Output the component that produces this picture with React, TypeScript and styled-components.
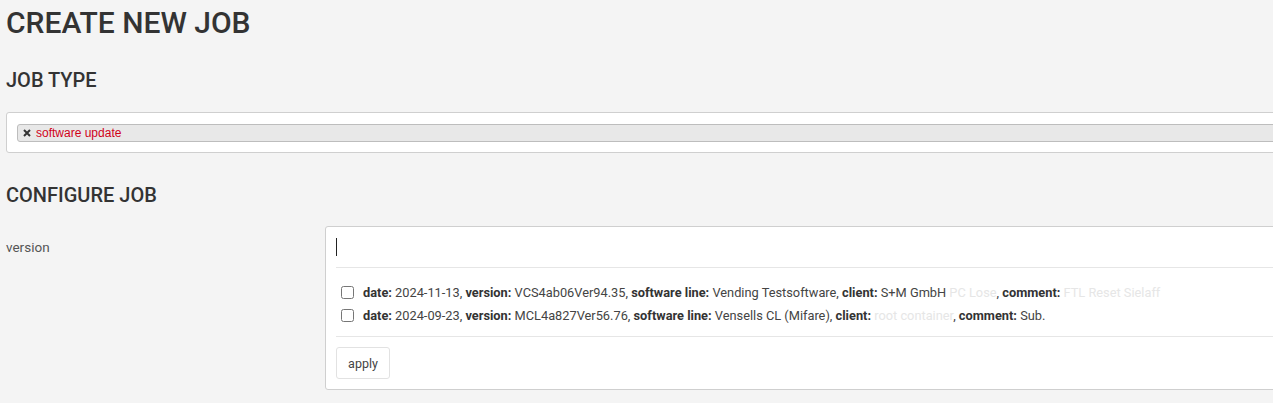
import React from "react";
import styled, { createGlobalStyle } from "styled-components";

const GlobalStyle = createGlobalStyle`
  html, body {
    margin: 0;
    padding: 0;
    background: #f4f4f4;
    overflow: hidden;
  }
  body {
    font-family: Roboto, "Liberation Sans", Arial, sans-serif;
    color: #333;
  }
`;

interface IVersionItem {
  id: number;
  date: string;
  version: string;
  softwareLine: string;
  client: string;
  clientHidden?: string;
  comment: string;
  commentHidden?: boolean;
}

const versions: IVersionItem[] = [
  {
    id: 1,
    date: "2024-11-13",
    version: "VCS4ab06Ver94.35",
    softwareLine: "Vending Testsoftware",
    client: "S+M GmbH ",
    clientHidden: "PC Lose",
    comment: "FTL Reset Sielaff",
    commentHidden: true,
  },
  {
    id: 2,
    date: "2024-09-23",
    version: "MCL4a827Ver56.76",
    softwareLine: "Vensells CL (Mifare)",
    client: "",
    clientHidden: "root container",
    comment: "Sub.",
  },
];

const App = () => {
  return (
    <>
      <GlobalStyle />
      <PageWrapper>
        <Title>CREATE NEW JOB</Title>
        <SectionTitle>JOB TYPE</SectionTitle>
        <TypeBox>
          <Chip>
            <ChipRemove viewBox="0 0 8 8">
              <path d="M1 1 L7 7 M7 1 L1 7" />
            </ChipRemove>
            <ChipLabel>software update</ChipLabel>
          </Chip>
        </TypeBox>
        <SectionTitle className="configure">CONFIGURE JOB</SectionTitle>
        <FieldRow>
          <FieldLabel>version</FieldLabel>
          <Panel>
            <SearchArea>
              <Caret />
            </SearchArea>
            <OptionList>
              {versions.map((v) => (
                <OptionRow key={v.id}>
                  <CheckBox type="checkbox" />
                  <span>
                    <b>date:</b> {v.date}, <b>version:</b> {v.version},{" "}
                    <b>software line:</b> {v.softwareLine}, <b>client:</b>{" "}
                    {v.client}
                    {v.clientHidden && <Faded>{v.clientHidden}</Faded>},{" "}
                    <b>comment:</b>{" "}
                    {v.commentHidden ? <Faded>{v.comment}</Faded> : v.comment}
                  </span>
                </OptionRow>
              ))}
            </OptionList>
            <Footer>
              <ApplyButton>apply</ApplyButton>
            </Footer>
          </Panel>
        </FieldRow>
      </PageWrapper>
    </>
  );
};
export default App;

const PageWrapper = styled.div`
  width: 1300px;
  padding: 0 0 0 6px;
  box-sizing: border-box;
`;
const Title = styled.h1`
  margin: 0;
  padding-top: 4px;
  font-size: 30px;
  line-height: 38px;
  font-weight: 500;
  color: #333;
`;
const SectionTitle = styled.h2`
  margin: 26px 0 0;
  font-size: 20px;
  line-height: 24px;
  font-weight: 500;
  color: #333;
  &.configure {
    margin-top: 30px;
  }
`;
const TypeBox = styled.div`
  margin-top: 20px;
  height: 41px;
  box-sizing: border-box;
  border: 1px solid #cfcfcf;
  border-radius: 3px;
  background: #fff;
  padding: 11px 10px 0 10px;
`;
const Chip = styled.div`
  display: flex;
  align-items: center;
  height: 18px;
  box-sizing: border-box;
  border: 1px solid #bdbdbd;
  border-radius: 3px;
  background: #e8e8e8;
  padding: 0 5px;
  gap: 5px;
  font-size: 12px;
`;
const ChipRemove = styled.svg`
  width: 8px;
  height: 8px;
  flex-shrink: 0;
  stroke: #333;
  stroke-width: 2;
  fill: none;
`;
const ChipLabel = styled.span`
  color: #d0021b;
  font-family: "Liberation Sans", Arial, sans-serif;
`;
const FieldRow = styled.div`
  display: flex;
  margin-top: 19px;
`;
const FieldLabel = styled.div`
  width: 319px;
  flex-shrink: 0;
  padding-top: 13px;
  font-size: 13.5px;
  color: #555;
`;
const Panel = styled.div`
  flex: 1;
  height: 164px;
  box-sizing: border-box;
  border: 1px solid #cfcfcf;
  border-radius: 3px;
  background: #fff;
  padding: 0 0 0 10px;
  display: flex;
  flex-direction: column;
`;
const SearchArea = styled.div`
  height: 41px;
  box-sizing: border-box;
  border-bottom: 1px solid #e6e6e6;
  padding: 11px 0 0 0;
`;
const Caret = styled.div`
  width: 1px;
  height: 18px;
  background: #222;
`;
const OptionList = styled.div`
  padding: 13px 0 9px 5px;
  border-bottom: 1px solid #e6e6e6;
`;
const OptionRow = styled.label`
  display: flex;
  align-items: center;
  height: 23px;
  gap: 9px;
  font-size: 12.8px;
  color: #444;
  white-space: nowrap;
  b {
    font-weight: 700;
    color: #333;
  }
`;
const CheckBox = styled.input`
  margin: 0;
  width: 13px;
  height: 13px;
`;
const Faded = styled.span`
  color: #e6e6e6;
`;
const Footer = styled.div`
  padding-top: 10px;
`;
const ApplyButton = styled.button`
  width: 54px;
  height: 32px;
  border: 1px solid #e2e2e2;
  border-radius: 3px;
  background: #fff;
  font-family: Roboto, "Liberation Sans", Arial, sans-serif;
  font-size: 12.5px;
  color: #444;
  padding: 0;
`;
